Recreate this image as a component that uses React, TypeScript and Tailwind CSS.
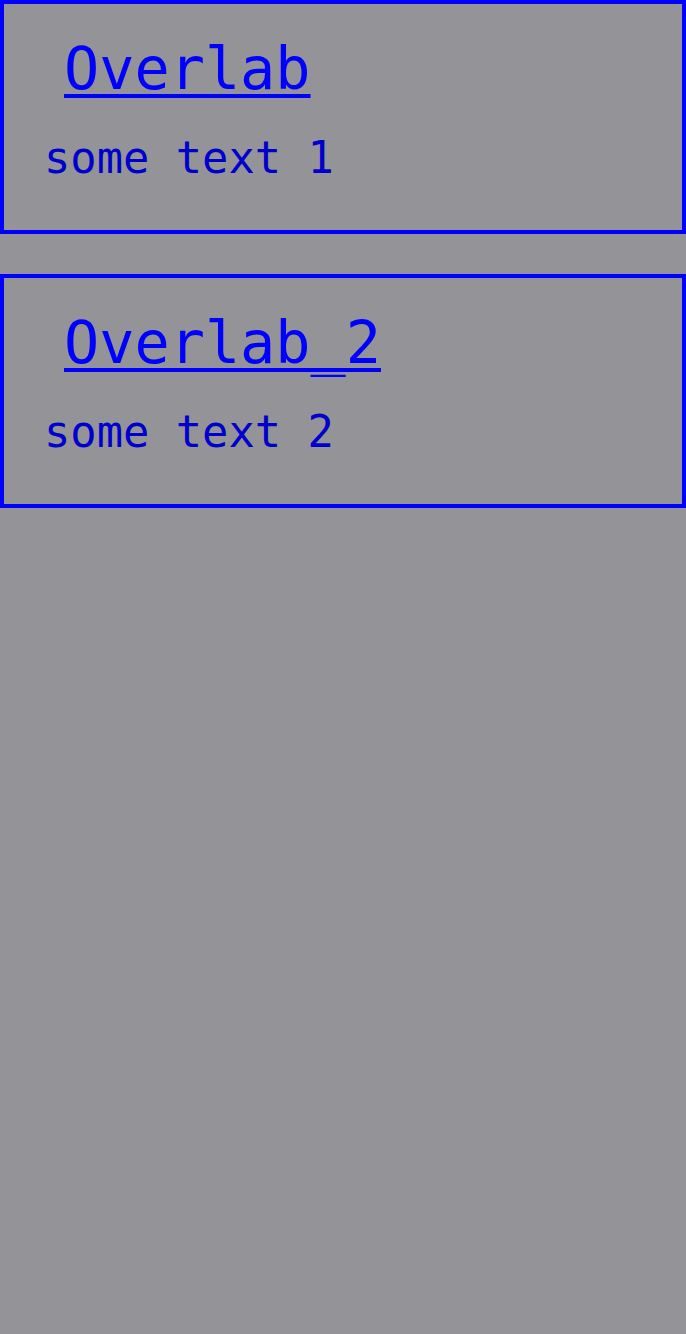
import React from 'react';

const cards = [
  { title: 'Overlab', text: 'some text 1' },
  { title: 'Overlab_2', text: 'some text 2' },
];

const App: React.FC = () => {
  return (
    <div className="min-h-screen bg-[#949398] font-['DejaVu_Sans_Mono',monospace]">
      <div className="flex flex-col gap-[40px]">
        {cards.map((c) => (
          <div key={c.title} className="h-[234px] border-[4px] border-[#0000ff] pt-[36px] pl-[40px]">
            <a href="#" className="ml-[20px] block w-fit text-[58.5px] leading-none text-[#0000ff] underline decoration-[4px] underline-offset-[5px]">
              {c.title}
            </a>
            <p className="mt-[37px] text-[43.75px] leading-none text-[#0000cc]">{c.text}</p>
          </div>
        ))}
      </div>
    </div>
  );
};

export default App;
